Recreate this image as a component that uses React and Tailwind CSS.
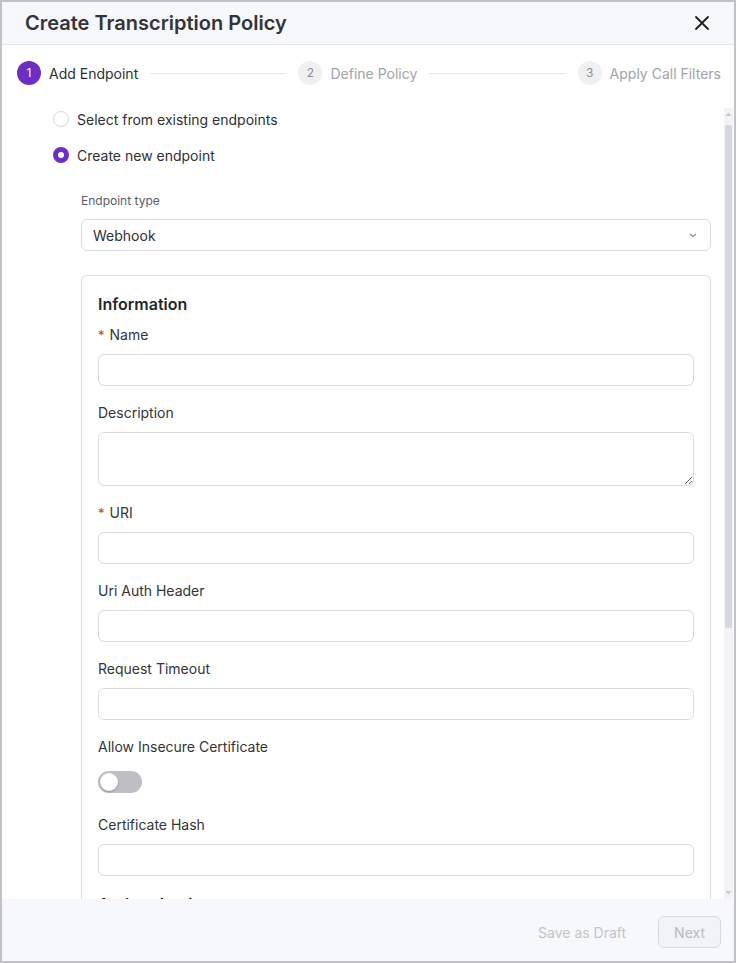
import React from "react";

const font = { fontFamily: "Inter, 'Noto Sans', sans-serif" };

function Step({ n, label, active }) {
  return (
    <div className="flex items-center gap-2 shrink-0">
      <div
        className={
          active
            ? "w-6 h-6 rounded-full bg-[#6c2ec3] text-white text-[12px] flex items-center justify-center"
            : "w-6 h-6 rounded-full bg-[#f0f0f2] text-[#8c8c94] text-[12px] flex items-center justify-center"
        }
      >
        {n}
      </div>
      <span className={active ? "text-[14px] text-[#2f2f35]" : "text-[14px] text-[#a3a3ab]"}>{label}</span>
    </div>
  );
}

function Field({ label, required, children }) {
  return (
    <div className="flex flex-col">
      <label className="h-[22px] leading-[22px] text-[14px] text-[#34343a] flex items-center">
        {required && <span className="text-[#b8432f] mr-[5px] text-[13px]">*</span>}
        {label}
      </label>
      <div className="mt-2">{children}</div>
    </div>
  );
}

function TextInput() {
  return (
    <input
      type="text"
      className="w-full h-8 rounded-md border border-[#d9d9de] bg-white px-3 text-[14px] outline-none"
    />
  );
}

export default function App() {
  return (
    <div className="w-[736px] h-[963px] border-2 border-[#c2c2c4] bg-white flex flex-col overflow-hidden" style={font}>
      {/* header */}
      <div className="h-[43px] shrink-0 bg-[#f7f8fc] border-b border-[#e2e5ee] flex items-center justify-between pl-[23px] pr-[24px]">
        <h1 className="text-[20px] font-semibold text-[#333338] leading-none">Create Transcription Policy</h1>
        <svg width="16" height="16" viewBox="0 0 16 16" className="text-[#1f1f1f]">
          <path d="M2 2 L14 14 M14 2 L2 14" stroke="currentColor" strokeWidth="1.8" strokeLinecap="round" />
        </svg>
      </div>

      {/* stepper */}
      <div className="shrink-0 h-[63px] pt-[16px] pl-[15px] pr-[13px]">
        <div className="flex items-center h-6">
          <Step n="1" label="Add Endpoint" active />
          <div className="flex-1 h-px bg-[#e6e6ea] mx-3" />
          <Step n="2" label="Define Policy" />
          <div className="flex-1 h-px bg-[#e6e6ea] mx-3" />
          <Step n="3" label="Apply Call Filters" />
        </div>
      </div>

      {/* body */}
      <div className="flex-1 min-h-0 flex">
        <div className="flex-1 min-w-0 overflow-hidden pl-[51px] pr-[13px]">
          <div className="flex flex-col gap-[14px]">
            <label className="flex items-center gap-2 h-[22px] text-[14px] text-[#2f2f35]">
              <span className="w-4 h-4 rounded-full border border-[#d9d9de] bg-white" />
              Select from existing endpoints
            </label>
            <label className="flex items-center gap-2 h-[22px] text-[14px] text-[#2f2f35]">
              <span className="w-4 h-4 rounded-full border-[5px] border-[#6c2ec3] bg-white" />
              Create new endpoint
            </label>
          </div>

          <div className="pl-[28px] mt-[27px]">
            <div className="text-[12px] leading-4 text-[#5c5c66]">Endpoint type</div>
            <div className="mt-[10px] h-8 rounded-md border border-[#d9d9de] flex items-center justify-between pl-[11px] pr-[12px] text-[14px] text-[#2f2f35]">
              <span>Webhook</span>
              <svg width="10" height="10" viewBox="0 0 10 10">
                <path d="M2 4 L5 6.5 L8 4" fill="none" stroke="#8c8c9a" strokeWidth="1.2" />
              </svg>
            </div>

            <div className="mt-6 rounded-md border border-[#dedee3] px-4 pt-4 pb-6">
              <h2 className="text-[16px] leading-6 font-semibold text-[#26262b]">Information</h2>
              <div className="mt-2 flex flex-col gap-4">
                <Field label="Name" required>
                  <TextInput />
                </Field>
                <Field label="Description">
                  <textarea className="block w-full h-[54px] rounded-md border border-[#d9d9de] bg-white px-3 py-1 text-[14px] outline-none" />
                </Field>
                <Field label="URI" required>
                  <TextInput />
                </Field>
                <Field label="Uri Auth Header">
                  <TextInput />
                </Field>
                <Field label="Request Timeout">
                  <TextInput />
                </Field>
                <Field label="Allow Insecure Certificate">
                  <div className="h-8 flex items-center">
                    <div className="w-11 h-[22px] rounded-full bg-[#bfbfc3] p-[2px] flex items-center">
                      <div className="w-[18px] h-[18px] rounded-full bg-white shadow-[0_1px_2px_rgba(0,0,0,0.25)]" />
                    </div>
                  </div>
                </Field>
                <Field label="Certificate Hash">
                  <TextInput />
                </Field>
              </div>
              <h2 className="mt-4 text-[16px] leading-6 font-semibold text-[#26262b]">Authentication</h2>
              <div className="mt-2 h-40" />
            </div>
          </div>
        </div>

        {/* scrollbar */}
        <div className="w-[9px] shrink-0 bg-[#f3f3f5] flex flex-col items-center mr-px">
          <svg width="7" height="6" viewBox="0 0 7 6" className="mt-[3px]">
            <path d="M0.5 5 L3.5 1.5 L6.5 5 Z" fill="#c8c9d1" />
          </svg>
          <div className="mt-[8px] w-[7px] h-[503px] rounded-[2px] bg-[#d6d8e1]" />
          <div className="flex-1" />
          <svg width="7" height="6" viewBox="0 0 7 6" className="mb-[3px]">
            <path d="M0.5 1 L3.5 4.5 L6.5 1 Z" fill="#c8c9d1" />
          </svg>
        </div>
      </div>

      {/* footer */}
      <div className="h-[62px] shrink-0 bg-[#f7f8fc] flex items-center justify-end pt-1 pr-[13px] gap-8">
        <span className="text-[14px] text-[#c3c3cb]">Save as Draft</span>
        <button className="h-8 px-[15px] rounded-md border border-[#d9d9de] bg-[#f2f3f6] text-[14px] text-[#b8b8c2]">
          Next
        </button>
      </div>
    </div>
  );
}
